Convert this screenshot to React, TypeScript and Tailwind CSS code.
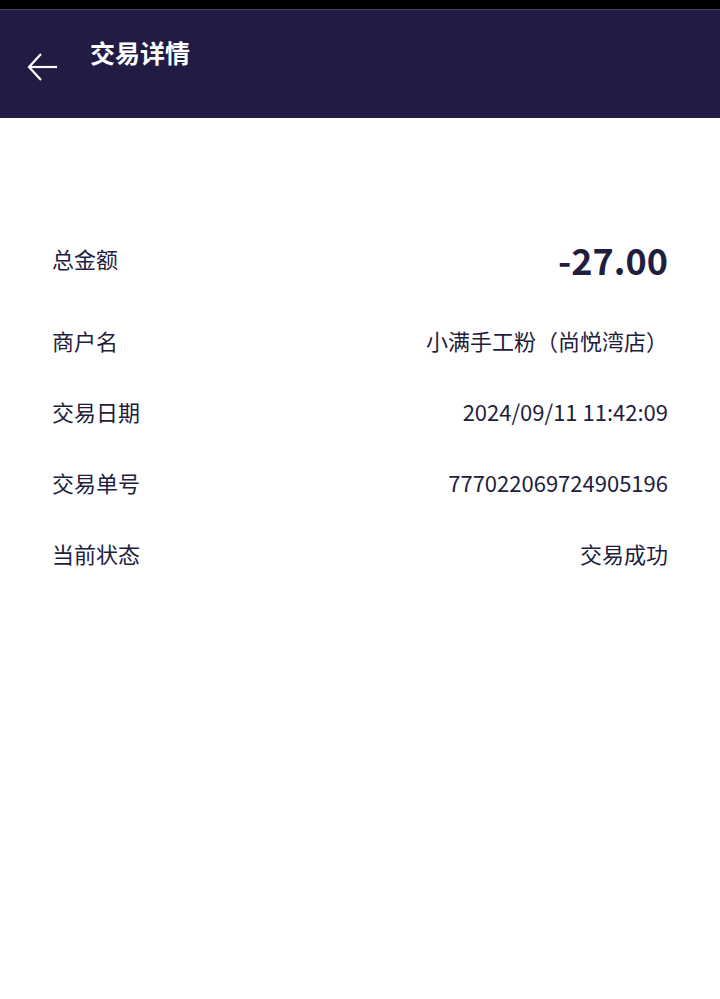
import { ReactNode } from "react";

const FONT = { fontFamily: '"Noto Sans CJK SC", "Noto Sans", sans-serif' };

const rows: { label: string; value: ReactNode }[] = [
  { label: "商户名", value: "小满手工粉（尚悦湾店）" },
  { label: "交易日期", value: "2024/09/11 11:42:09" },
  { label: "交易单号", value: "777022069724905196" },
  { label: "当前状态", value: "交易成功" },
];

const Row = ({ label, value }: { label: string; value: ReactNode }) => (
  <div className="flex h-[71px] items-center justify-between">
    <span className="text-[22px] text-[#221d3d]">{label}</span>
    <span className="text-[22px] text-[#221d3d]">{value}</span>
  </div>
);

const App = () => {
  return (
    <div className="min-h-[999px] bg-white" style={FONT}>
      <div className="h-[9px] bg-black" />
      <header className="flex h-[109px] items-start border-t border-[#4a4564] bg-[#221c45] pt-[24px]">
        <button className="ml-[26px] mt-[16px] text-white">
          <svg width="34" height="34" viewBox="0 0 34 34" fill="none" stroke="currentColor" strokeWidth="2.2">
            <path d="M3 17 H31" />
            <path d="M15 4 L3 17 L15 30" />
          </svg>
        </button>
        <h1 className="ml-[30px] text-[25px] font-bold text-white">交易详情</h1>
      </header>

      <main className="pl-[52px] pr-[52px] pt-[105px]">
        <div className="mb-[11px] flex h-[71px] items-center justify-between">
          <span className="text-[22px] text-[#221d3d]">总金额</span>
          <span className="text-[36px] font-bold text-[#221d3d]">-27.00</span>
        </div>
        {rows.map((r) => (
          <Row key={r.label} label={r.label} value={r.value} />
        ))}
      </main>
    </div>
  );
};

export default App;
